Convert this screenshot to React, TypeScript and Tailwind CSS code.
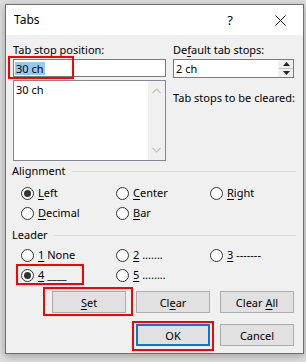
import React from "react";

type RadioProps = { checked?: boolean; children: React.ReactNode };

const Radio: React.FC<RadioProps> = ({ checked, children }) => (
  <div className="flex items-center h-[20px]">
    <span className="w-[13px] h-[13px] shrink-0 rounded-full border border-[#333333] bg-white flex items-center justify-center">
      {checked && <span className="w-[7px] h-[7px] rounded-full bg-[#333333]" />}
    </span>
    <span className="ml-[4px] whitespace-nowrap">{children}</span>
  </div>
);

const U: React.FC<{ children: React.ReactNode }> = ({ children }) => (
  <span className="underline underline-offset-[2px] decoration-1">{children}</span>
);

const GroupHeader: React.FC<{ title: string; className?: string }> = ({ title, className }) => (
  <div className={`flex items-center h-[16px] ${className ?? ""}`}>
    <span className="-ml-px">{title}</span>
    <span className="flex-1 h-px bg-[#dcdcdc] ml-[6px]" />
  </div>
);

const Btn: React.FC<{ children: React.ReactNode; primary?: boolean }> = ({ children, primary }) => (
  <button
    className={`w-[74px] h-[22px] bg-[#e1e1e1] flex items-center justify-center leading-none ${
      primary ? "border-2 border-[#0078d7]" : "border border-[#adadad]"
    }`}
  >
    <span className="whitespace-pre">{children}</span>
  </button>
);

const App: React.FC = () => {
  return (
    <div className="w-[306px] h-[362px] bg-[#dedede] pt-[4px] pl-[5px] font-['Noto_Sans',sans-serif] text-[11px] leading-[16px] text-black">
      <div className="w-[299px] h-[350px] border border-[#6f6f6f] bg-[#f0f0f0] flex flex-col shadow-[0_2px_8px_rgba(0,0,0,0.3)]">
        {/* Title bar */}
        <div className="h-[30px] bg-white flex items-center shrink-0">
          <span className="ml-[8px] text-[12px]">Tabs</span>
          <span className="ml-auto text-[13px] w-[12px] text-center mr-[39px]">?</span>
          <svg width="11" height="11" viewBox="0 0 11 11" className="mr-[17px]">
            <path d="M0.5 0.5 L10.5 10.5 M10.5 0.5 L0.5 10.5" stroke="#111" strokeWidth="1" />
          </svg>
        </div>

        {/* Body */}
        <div className="flex-1 px-[7px] pt-[7px]">
          {/* Top section */}
          <div className="flex">
            <div className="w-[153px]">
              <div className="h-[17px]">Tab stop position:</div>
              <div className="relative h-[18px] border border-[#7a7a7a] bg-white flex items-center pl-[1px]">
                <span className="bg-[#99c9ef] px-[1px] leading-[13px]">30 ch</span>
                <span className="absolute left-[-6px] top-[-4px] w-[66px] h-[23px] border-2 border-[#ff0000]" />
              </div>
              <div className="mt-[3px] h-[81px] border border-[#828790] bg-white flex">
                <div className="flex-1 pl-[2px] pt-px">30 ch</div>
                <div className="w-[17px] bg-[#f0f0f0] flex flex-col items-center justify-between py-[7px]">
                  <svg width="9" height="6" viewBox="0 0 9 6">
                    <path d="M0.5 5 L4.5 1 L8.5 5" stroke="#c0c0c0" strokeWidth="1.2" fill="none" />
                  </svg>
                  <svg width="9" height="6" viewBox="0 0 9 6">
                    <path d="M0.5 1 L4.5 5 L8.5 1" stroke="#c0c0c0" strokeWidth="1.2" fill="none" />
                  </svg>
                </div>
              </div>
            </div>

            <div className="ml-[7px] w-[121px]">
              <div className="h-[17px]">
                De<U>f</U>ault tab stops:
              </div>
              <div className="h-[19px] border border-[#7a7a7a] bg-white flex items-center">
                <span className="pl-[2px] flex-1">2 ch</span>
                <div className="w-[15px] h-full flex flex-col border-l border-[#f0f0f0]">
                  <div className="flex-1 bg-[#f0f0f0] flex items-center justify-center border-b border-[#c8c8c8]">
                    <svg width="7" height="4" viewBox="0 0 7 4">
                      <path d="M0 4 L3.5 0 L7 4 Z" fill="#222" />
                    </svg>
                  </div>
                  <div className="flex-1 bg-[#f0f0f0] flex items-center justify-center">
                    <svg width="7" height="4" viewBox="0 0 7 4">
                      <path d="M0 0 L3.5 4 L7 0 Z" fill="#222" />
                    </svg>
                  </div>
                </div>
              </div>
              <div className="mt-[12px] whitespace-nowrap">Tab stops to be cleared:</div>
            </div>
          </div>

          {/* Alignment */}
          <GroupHeader title="Alignment" className="mt-[2px]" />
          <div className="grid grid-cols-[95px_94px_1fr] pl-[8px] mt-[4px]">
            <Radio checked>
              <U>L</U>eft
            </Radio>
            <Radio>
              <U>C</U>enter
            </Radio>
            <Radio>
              <U>R</U>ight
            </Radio>
            <Radio>
              <U>D</U>ecimal
            </Radio>
            <Radio>
              <U>B</U>ar
            </Radio>
          </div>

          {/* Leader */}
          <GroupHeader title="Leader" className="mt-[4px]" />
          <div className="grid grid-cols-[95px_94px_1fr] pl-[8px] mt-[2px]">
            <Radio>
              <U>1</U> None
            </Radio>
            <Radio>
              <U>2</U> .......
            </Radio>
            <Radio>
              <U>3</U> -------
            </Radio>
            <div className="relative">
              <Radio checked>
                <U>4</U> ____
              </Radio>
              <span className="absolute left-[-5px] top-[-1px] w-[68px] h-[21px] border-2 border-[#ff0000]" />
            </div>
            <Radio>
              <U>5</U> ........
            </Radio>
          </div>

          {/* Buttons */}
          <div className="flex justify-end gap-[10px] mt-[6px] mr-[2px]">
            <div className="relative">
              <Btn>
                <U>S</U>et
              </Btn>
              <span className="absolute left-[-9px] top-[-4px] w-[90px] h-[29px] border-2 border-[#ff0000]" />
            </div>
            <Btn>
              Cl<U>e</U>ar
            </Btn>
            <Btn>
              Clear <U>A</U>ll
            </Btn>
          </div>
          <div className="flex justify-end gap-[10px] mt-[11px] mr-[2px]">
            <div className="relative">
              <Btn primary>OK</Btn>
              <span className="absolute left-[-4px] top-[-3px] w-[82px] h-[30px] border-2 border-[#ff0000]" />
            </div>
            <Btn>Cancel</Btn>
          </div>
        </div>
      </div>
    </div>
  );
};

export default App;
